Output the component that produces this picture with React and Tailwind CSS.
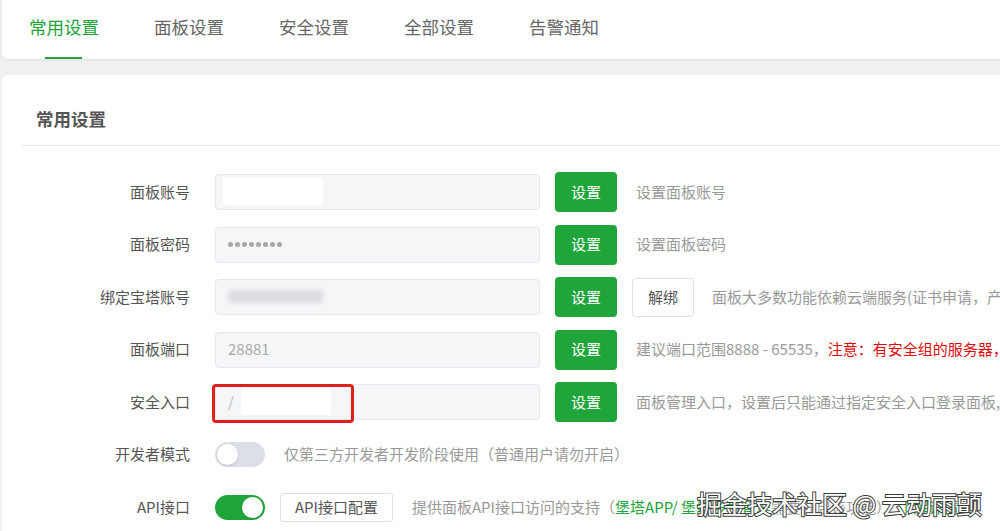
const tabs = ["常用设置", "面板设置", "安全设置", "全部设置", "告警通知"];

function Field({ children, className = "" }) {
  return (
    <div
      className={
        "relative h-[36px] w-[325px] shrink-0 rounded-[4px] border border-[#e4e7ed] bg-[#f5f6f8] pl-[12px] flex items-center text-[15px] text-[#aaa] " +
        className
      }
    >
      {children}
    </div>
  );
}

function SetButton() {
  return (
    <button className="h-[40px] w-[62px] shrink-0 rounded-[4px] bg-[#20a53a] text-[15px] text-white">
      设置
    </button>
  );
}

function Row({ label, children }) {
  return (
    <div className="flex h-[40px] items-center">
      <div className="w-[188px] shrink-0 text-right text-[15px] text-[#555]">
        {label}
      </div>
      <div className="ml-[25px] flex items-center whitespace-nowrap">
        {children}
      </div>
    </div>
  );
}

function Toggle({ on }) {
  return (
    <div
      className={
        "relative h-[25px] w-[50px] shrink-0 rounded-full " +
        (on ? "bg-[#20a53a]" : "bg-[#dcdfe6]")
      }
    >
      <div
        className={
          "absolute top-[2px] h-[21px] w-[21px] rounded-full bg-white shadow-sm " +
          (on ? "right-[2px]" : "left-[2px]")
        }
      />
    </div>
  );
}

export default function App() {
  return (
    <div className="relative h-[531px] w-[1000px] overflow-hidden bg-[#f0f0f0] pl-[2px] font-['Noto_Sans_CJK_SC',sans-serif]">
      {/* tab bar */}
      <div className="flex h-[59px] w-[1040px] items-stretch gap-[55px] rounded-bl-[6px] bg-white pl-[27px] shadow-[0_1px_3px_rgba(0,0,0,0.06)]">
        {tabs.map((t, i) => (
          <div
            key={t}
            className={
              "relative flex items-center pb-[5px] text-[17.5px] " +
              (i === 0 ? "text-[#20a53a]" : "text-[#666]")
            }
          >
            {t}
            {i === 0 && (
              <span className="absolute bottom-0 left-[16px] h-[2px] w-[37px] bg-[#20a53a]" />
            )}
          </div>
        ))}
      </div>

      {/* settings panel */}
      <div className="mt-[16px] h-[480px] w-[1040px] rounded-tl-[6px] bg-white">
        <div className="mx-[20px] h-[71px] border-b border-[#e8e8e8] pl-[14px] pt-[31px] text-[17.5px] font-bold leading-[26px] text-[#555]">
          常用设置
        </div>

        <div className="mt-[26px] flex flex-col gap-[12.5px]">
          <Row label="面板账号">
            <Field>
              <div className="absolute left-[7px] top-[3px] h-[27px] w-[100px] rounded-[2px] bg-white" />
            </Field>
            <div className="ml-[15px]">
              <SetButton />
            </div>
            <span className="ml-[19px] text-[15px] text-[#999]">设置面板账号</span>
          </Row>

          <Row label="面板密码">
            <Field>
              <div className="flex gap-[2.5px]">
                {[0, 1, 2, 3, 4, 5, 6, 7].map((d) => (
                  <span key={d} className="h-[4.5px] w-[4.5px] rounded-full bg-[#a8a8a8]" />
                ))}
              </div>
            </Field>
            <div className="ml-[15px]">
              <SetButton />
            </div>
            <span className="ml-[19px] text-[15px] text-[#999]">设置面板密码</span>
          </Row>

          <Row label="绑定宝塔账号">
            <Field>
              <div className="absolute left-[12px] top-[10px] h-[13px] w-[95px] rounded-[2px] bg-[#dedee2] blur-[2px]" />
            </Field>
            <div className="ml-[15px]">
              <SetButton />
            </div>
            <button className="ml-[15px] h-[39px] w-[62px] shrink-0 rounded-[4px] border border-[#dcdfe6] bg-white text-[15px] text-[#555]">
              解绑
            </button>
            <span className="ml-[18px] text-[15px] text-[#999]">
              面板大多数功能依赖云端服务(证书申请，产品购买，软件商店等)，请绑定宝塔账号
            </span>
          </Row>

          <Row label="面板端口">
            <Field>28881</Field>
            <div className="ml-[15px]">
              <SetButton />
            </div>
            <span className="ml-[19px] text-[15px] text-[#999]">
              建议端口范围8888 - 65535，
              <span className="text-[#e00b0b]">注意：有安全组的服务器，请提前在安全组放行新端口</span>
            </span>
          </Row>

          <Row label="安全入口">
            <Field>
              <span className="text-[#bbb]">/</span>
              <div className="absolute left-[25px] top-[3px] h-[27px] w-[90px] bg-white" />
              <div className="absolute left-[-4px] top-[-1px] h-[39px] w-[142px] rounded-[4px] border-[3px] border-[#e0201c]" />
            </Field>
            <div className="ml-[15px]">
              <SetButton />
            </div>
            <span className="ml-[19px] text-[15px] text-[#999]">
              面板管理入口，设置后只能通过指定安全入口登录面板,如: /abcdefg
            </span>
          </Row>

          <Row label="开发者模式">
            <Toggle on={false} />
            <span className="ml-[19px] text-[15px] text-[#999]">
              仅第三方开发者开发阶段使用（普通用户请勿开启）
            </span>
          </Row>

          <Row label="API接口">
            <Toggle on />
            <button className="ml-[15px] h-[29px] w-[113px] shrink-0 rounded-[3px] border border-[#dcdfe6] bg-white text-[15px] text-[#555]">
              API接口配置
            </button>
            <span className="ml-[19px] text-[15px] text-[#999]">
              提供面板API接口访问的支持（
              <span className="text-[#20a53a]">堡塔APP/ 堡塔多机管理</span>
              需要开启该功能），
              <span className="text-[#20a53a]">了解详情</span>
            </span>
          </Row>
        </div>
      </div>

      {/* watermark */}
      <div className="absolute left-[697px] top-[486px] whitespace-nowrap text-[25px] leading-[34px] text-white [-webkit-text-stroke:2px_#3a3a3a] [paint-order:stroke_fill]">
        掘金技术社区 @ 云动雨颤
      </div>
    </div>
  );
}
